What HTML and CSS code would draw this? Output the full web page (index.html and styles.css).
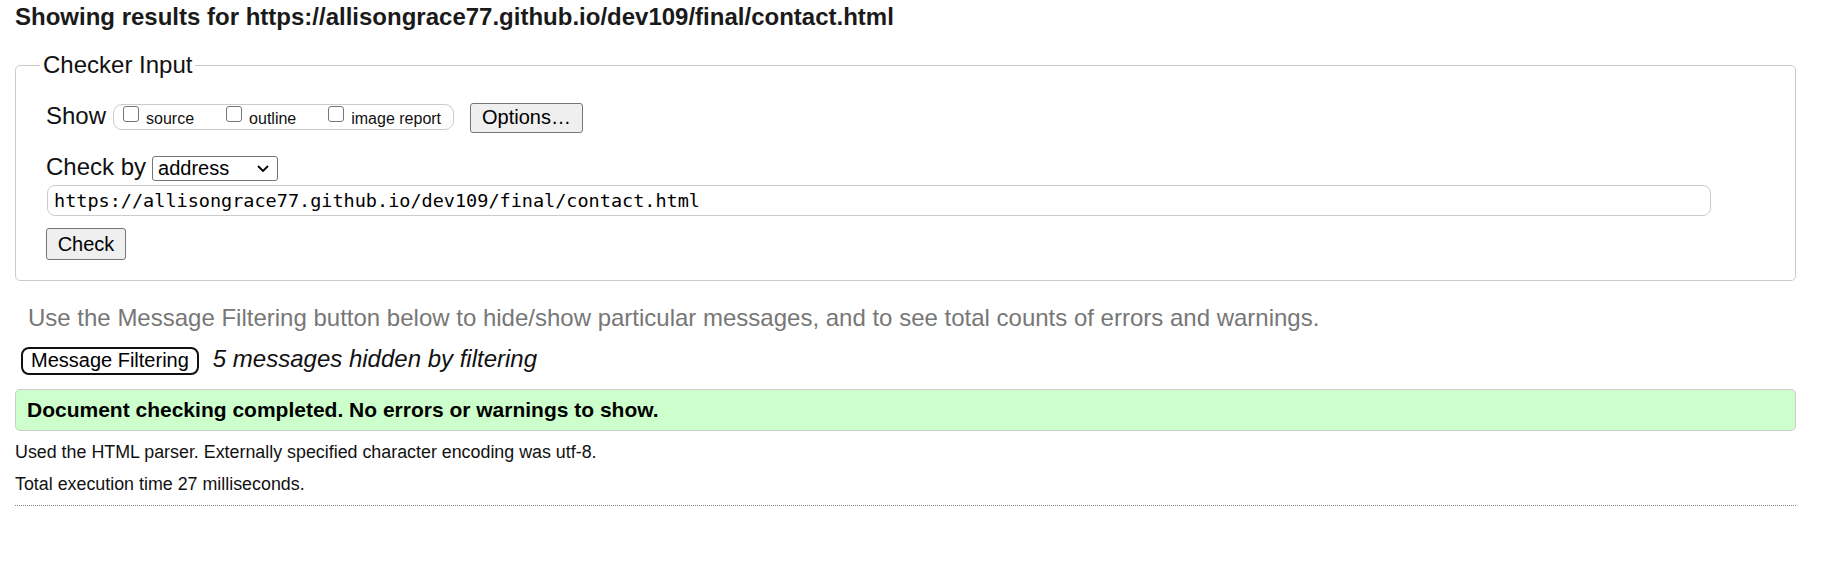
FILE: index.html
```html
<!DOCTYPE html>
<html lang="en">
<head>
<meta charset="utf-8">
<title>Showing results for contact.html - Nu Html Checker</title>
<link rel="stylesheet" href="styles.css">
</head>
<body>
<h2 class="title">Showing results for https://allisongrace77.github.io/dev109/final/contact.html</h2>
<fieldset class="checker">
  <legend class="legend">Checker Input</legend>
  <div class="show-row">
    <span class="label show-label">Show</span>
    <span class="pill">
      <label class="opt"><span class="cb"></span>source</label><label class="opt"><span class="cb"></span>outline</label><label class="opt last"><span class="cb"></span>image report</label>
    </span>
    <button class="btn options" type="button">Options…</button>
  </div>
  <div class="by-row">
    <span class="label">Check by</span>
    <span class="select"><span class="select-text">address</span><svg class="chev" width="12" height="7" viewBox="0 0 12 7"><path d="M1 1 L6 6 L11 1" fill="none" stroke="#000" stroke-width="1.8"/></svg></span>
  </div>
  <div class="url">https://allisongrace77.github.io/dev109/final/contact.html</div>
  <button class="btn check" type="button">Check</button>
</fieldset>
<p class="hint">Use the Message Filtering button below to hide/show particular messages, and to see total counts of errors and warnings.</p>
<div class="filter-row">
  <button class="filter" type="button">Message Filtering</button>
  <em class="hidden-count">5 messages hidden by filtering</em>
</div>
<div class="success">Document checking completed. No errors or warnings to show.</div>
<p class="meta first">Used the HTML parser. Externally specified character encoding was utf-8.</p>
<p class="meta">Total execution time 27 milliseconds.</p>
<hr class="rule">
</body>
</html>
```

FILE: styles.css
```css
* { box-sizing: border-box; }

html, body {
  background: #fff;
}

body {
  margin: 0;
  padding: 0 44px 0 15px;
  font-family: "Liberation Sans", Arial, sans-serif;
  color: #000;
}

.title {
  margin: 3px 0 0;
  font-size: 24px;
  line-height: 28px;
  font-weight: bold;
  color: #1a1a1a;
}

.checker {
  margin: 20px 0 0;
  padding: 23px 84px 20px 30px;
  border: 1px solid #ccc;
  border-radius: 5px;
  min-width: 0;
}

.legend {
  font-size: 24px;
  line-height: 28px;
  padding: 0 3px;
  margin-left: -6px;
  color: #111;
}

.show-row {
  display: flex;
  align-items: baseline;
}

.label {
  font-size: 24px;
  line-height: 28px;
  color: #111;
}

.show-label {
  margin-right: 7px;
}

.pill {
  display: inline-block;
  border: 1px solid #ccc;
  border-radius: 9px;
  padding: 1px 12px 1px 9px;
  font-size: 16px;
  line-height: 18px;
  margin-right: 16px;
  color: #111;
}

.opt {
  margin-right: 32px;
}

.opt.last {
  margin-right: 0;
}

.cb {
  display: inline-block;
  width: 16px;
  height: 16px;
  border: 1px solid #767676;
  border-radius: 3px;
  background: #fff;
  vertical-align: 2px;
  margin-right: 7px;
}

.btn {
  font-family: "Liberation Sans", Arial, sans-serif;
  font-size: 20px;
  line-height: 23px;
  color: #000;
  background: #efefef;
  border: 1px solid #767676;
  border-radius: 3px;
  margin: 0;
}

.options {
  padding: 2px 11px 3px;
}

.by-row {
  margin-top: 19.5px;
  display: flex;
  align-items: baseline;
  gap: 6px;
}

.select {
  display: inline-flex;
  align-items: center;
  justify-content: space-between;
  width: 126px;
  height: 25px;
  border: 1px solid #767676;
  border-radius: 3px;
  padding: 0 8px 0 5px;
  font-size: 20px;
  line-height: 23px;
  background: #fff;
}

.chev {
  display: block;
  margin-top: 1px;
}

.url {
  margin-top: 4px;
  margin-left: 1px;
  height: 31px;
  border: 1px solid #ccc;
  border-radius: 8px;
  padding: 4px 6px 3px;
  font-family: "DejaVu Sans Mono", "Liberation Mono", monospace;
  font-size: 18.5px;
  line-height: 22px;
  color: #000;
  white-space: nowrap;
  overflow: hidden;
}

.check {
  display: block;
  margin-top: 12.5px;
  width: 80px;
  height: 32px;
  padding: 4px 0 3px;
  text-align: center;
}

.hint {
  margin: 23px 0 0 13px;
  font-size: 24px;
  line-height: 28px;
  color: #777;
}

.filter-row {
  margin-top: 12.5px;
  display: flex;
  align-items: baseline;
  gap: 14px;
  padding-left: 6px;
}

.filter {
  font-family: "Liberation Sans", Arial, sans-serif;
  font-size: 20px;
  line-height: 22px;
  padding: 0 8px 2px;
  height: 28px;
  background: #fff;
  color: #000;
  border: 2px solid #111;
  border-radius: 8px;
  margin: 0;
}

.hidden-count {
  font-size: 24px;
  line-height: 28px;
  font-style: italic;
  color: #111;
}

.success {
  margin-top: 14.5px;
  height: 42px;
  background: #cfc;
  border: 1px solid #ccc;
  border-radius: 5px;
  padding: 8px 11px 8px;
  font-size: 21px;
  line-height: 24px;
  font-weight: bold;
  color: #000;
}

.meta {
  margin: 11px 0 0;
  font-size: 17.85px;
  line-height: 21px;
  color: #111;
}

.meta.first {
  margin-top: 11px;
}

.rule {
  margin: 10px 0 0;
  border: 0;
  border-top: 1px dotted #888;
  height: 0;
}
```
